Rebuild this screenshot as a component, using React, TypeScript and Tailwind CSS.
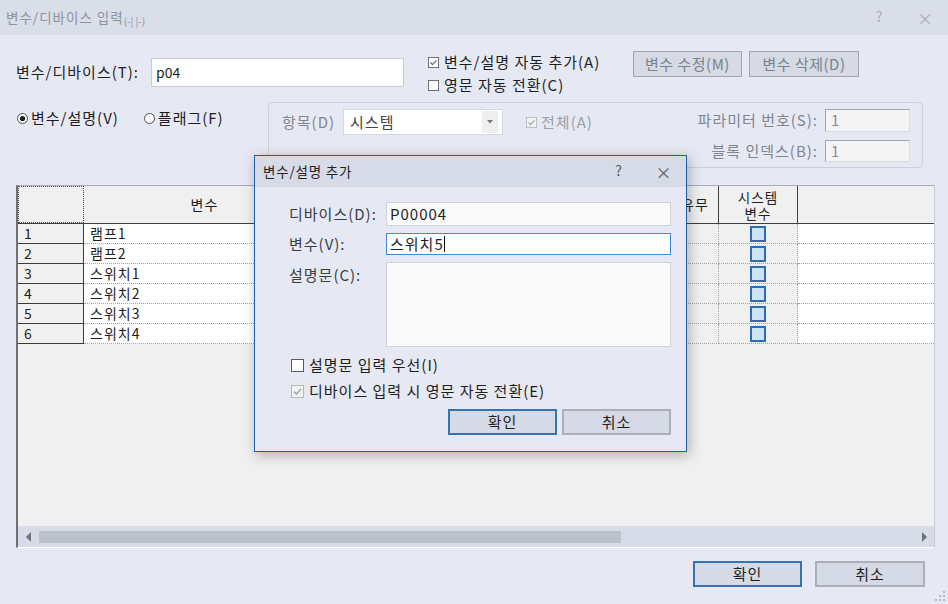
import React from "react";

/**
 * Variable/device input window with the "add variable/comment" dialog
 * floating on top of the variable table.
 */

const rows = ["램프1", "램프2", "스위치1", "스위치2", "스위치3", "스위치4"];

// Column widths of the variable table, left to right. The middle columns sit
// under the dialog, so their captions are left out.
const cols = [
  { w: "w-[242px]", label: "변수", white: true },
  { w: "w-[114px]", label: "", white: true },
  { w: "w-[200px]", label: "", white: true },
  { w: "w-[79px]", label: "사용 유무", white: false },
];

function CheckBox({
  checked,
  size = 11,
  muted = false,
}: {
  checked: boolean;
  size?: number;
  muted?: boolean;
}) {
  return (
    <svg width={size} height={size} viewBox="0 0 13 13" className="shrink-0">
      <rect
        x="0.5"
        y="0.5"
        width="12"
        height="12"
        fill={muted ? "#f3f3f3" : "#ffffff"}
        stroke={muted ? "#b4b7bd" : "#555a63"}
      />
      {checked && (
        <path
          d="M3 6.6 L5.4 9 L10 4"
          fill="none"
          stroke={muted ? "#a5a8ae" : "#6d7078"}
          strokeWidth="1.6"
        />
      )}
    </svg>
  );
}

function Radio({ on }: { on: boolean }) {
  return (
    <svg width="11" height="11" viewBox="0 0 11 11" className="shrink-0">
      <circle cx="5.5" cy="5.5" r="5" fill="#ffffff" stroke="#4b4f57" />
      {on && <circle cx="5.5" cy="5.5" r="2.6" fill="#1e1e1e" />}
    </svg>
  );
}

function Field({ children, w }: { children?: React.ReactNode; w: string }) {
  // sunken, read-only style box used in the parameter group
  return (
    <div
      className={`${w} h-full flex items-center border border-[#a3a6ad] border-r-[#d9dbe0] border-b-[#d9dbe0] bg-[#f4f4f4] pl-[5px] text-[15px] text-[#8a8e96]`}
    >
      {children}
    </div>
  );
}

function AddDialog() {
  return (
    <div className="absolute left-[254px] top-[155px] w-[433px] h-[297px] border border-[#1f5fa6] bg-[#e6e9f3] shadow-[2px_3px_12px_rgba(40,50,70,0.35)] flex flex-col">
      <div className="h-[31px] shrink-0 flex items-center bg-[#d6dbe7] pl-[8px] text-[13.5px] tracking-[0.8px] text-[#232323]">
        <span className="whitespace-nowrap">변수/설명 추가</span>
        <div className="ml-auto flex text-[#555a62]">
          <span className="w-[46px] text-center text-[14px]">?</span>
          <span className="w-[44px] text-center text-[16px]">×</span>
        </div>
      </div>

      <div className="flex flex-col pl-[34px] pr-[15px] pt-[15px] text-[15px] tracking-[1px]">
        <div className="flex items-center h-[24px]">
          <span className="w-[97px] whitespace-nowrap text-[#3a3d44]">디바이스(D):</span>
          <div className="flex-1 h-full flex items-center border border-[#cfd2d8] bg-[#fafafa] pl-[3px] text-[#1e1e1e]">
            P00004
          </div>
        </div>
        <div className="flex items-center h-[22px] mt-[7px]">
          <span className="w-[97px] whitespace-nowrap text-[#3a3d44]">변수(V):</span>
          <div className="flex-1 h-full flex items-center border border-[#3f8ad6] bg-white pl-[3px] text-[#1e1e1e]">
            스위치5
            <span className="w-px h-[16px] bg-black" />
          </div>
        </div>
        <div className="flex items-start mt-[7px]">
          <span className="w-[97px] whitespace-nowrap text-[#3a3d44] mt-[2px]">설명문(C):</span>
          <div className="flex-1 h-[85px] border border-[#cfd2d8] bg-[#fafafa]" />
        </div>

        <div className="flex items-center gap-[5px] h-[20px] mt-[8px] pl-[2px]">
          <CheckBox checked={false} size={13} />
          <span className="whitespace-nowrap">설명문 입력 우선(I)</span>
        </div>
        <div className="flex items-center gap-[5px] h-[20px] mt-[6px] pl-[2px]">
          <CheckBox checked size={13} muted />
          <span className="whitespace-nowrap">디바이스 입력 시 영문 자동 전환(E)</span>
        </div>

        <div className="flex justify-end gap-[5px] mt-[8px]">
          <button className="w-[109px] h-[26px] border-2 border-[#3473b4] bg-[#d5dae6] text-[15px] text-[#1e1e1e]">
            확인
          </button>
          <button className="w-[109px] h-[26px] border-2 border-[#abafb8] bg-[#d5dae6] text-[15px] text-[#1e1e1e]">
            취소
          </button>
        </div>
      </div>
    </div>
  );
}

function VarTable() {
  return (
    <div className="mt-[17px] w-[919px] h-[363px] flex flex-col border-t border-[#a9adb5] border-l-2 border-l-[#707070] border-r border-r-[#c7cbd3] border-b border-b-white bg-[#f0f0f0] text-[14px] tracking-[1px] text-[#1e1e1e]">
      {/* header */}
      <div className="h-[38px] shrink-0 flex border-b border-[#3f3f3f]">
        <div className="w-[66px] border border-dotted border-[#4a4a4a]" />
        {cols.map((c, j) => (
          <div
            key={j}
            className={`${c.w} flex items-center justify-center border-r border-[#3f3f3f] whitespace-nowrap`}
          >
            {c.label}
          </div>
        ))}
        <div className="w-[79px] flex items-center justify-center border-r border-[#3f3f3f] text-[13.5px] leading-[16px] text-center">
          <span>
            시스템
            <br />
            변수
          </span>
        </div>
        <div className="flex-1" />
      </div>

      {rows.map((name, i) => (
        <div key={name} className="h-[20px] shrink-0 flex">
          <div className="w-[66px] border-r border-b border-[#3a3a3a] pl-[6px] leading-[19px]">
            {i + 1}
          </div>
          {cols.map((c, j) => (
            <div
              key={j}
              className={`${c.w} border-r border-b border-dotted border-[#a2a2a2] ${
                c.white ? "bg-white" : "bg-[#f0f0f0]"
              } pl-[6px] leading-[19px] whitespace-nowrap`}
            >
              {j === 0 ? name : ""}
            </div>
          ))}
          <div className="w-[79px] flex items-center justify-center border-r border-b border-dotted border-[#a2a2a2]">
            <div className="w-[16px] h-[16px] border-2 border-[#2b6cb3] bg-[#cde4f8]" />
          </div>
          <div className="flex-1 bg-white border-b border-dotted border-[#a2a2a2]" />
        </div>
      ))}

      <div className="flex-1" />

      {/* horizontal scroll bar */}
      <div className="h-[21px] shrink-0 flex items-center bg-[#d6dbe7]">
        <svg width="8" height="10" viewBox="0 0 8 10" className="ml-[7px]">
          <path d="M6 0 L1 5 L6 10 Z" fill="#6e7279" />
        </svg>
        <div className="ml-[6px] w-[582px] h-[12px] bg-[#bcc1ca]" />
        <svg width="8" height="10" viewBox="0 0 8 10" className="ml-auto mr-[6px]">
          <path d="M2 0 L7 5 L2 10 Z" fill="#6e7279" />
        </svg>
      </div>
    </div>
  );
}

export default function App() {
  return (
    <div className="relative w-[948px] h-[604px] overflow-hidden bg-[#e6e9f3] text-[#1e1e1e] font-['Noto_Sans_CJK_KR','Noto_Sans',sans-serif]">
      {/* window title */}
      <div className="h-[35px] flex items-center bg-[#d9dee9] pl-[6px] text-[#8d929c]">
        <span className="text-[13.5px] tracking-[1px] whitespace-nowrap">변수/디바이스 입력</span>
        <span className="text-[10px] mt-[5px] whitespace-nowrap">(-| |-)</span>
        <div className="ml-auto flex text-[#a9adb5]">
          <span className="w-[46px] text-center text-[14px]">?</span>
          <span className="w-[46px] text-center text-[16px]">×</span>
        </div>
      </div>

      <div className="flex flex-col pl-[16px] pr-[13px] text-[15px] tracking-[1px]">
        {/* device input row */}
        <div className="mt-[16px] h-[46px] flex items-start">
          <div className="mt-[7px] h-[29px] flex items-center">
            <span className="w-[135px] whitespace-nowrap">변수/디바이스(T):</span>
            <div className="w-[253px] h-full flex items-center border border-[#c9ccd3] bg-white pl-[4px] text-[14px] tracking-normal">
              p04
            </div>
          </div>
          <div className="ml-[24px] w-[205px] flex flex-col">
            <div className="h-[23px] flex items-center gap-[5px]">
              <CheckBox checked />
              <span className="whitespace-nowrap">변수/설명 자동 추가(A)</span>
            </div>
            <div className="h-[23px] flex items-center gap-[5px]">
              <CheckBox checked={false} />
              <span className="whitespace-nowrap">영문 자동 전환(C)</span>
            </div>
          </div>
          <div className="flex gap-[7px] tracking-[0.5px]">
            <button className="w-[109px] h-[26px] border border-[#a2a6af] bg-[#d5dae5] text-[15px] text-[#7b808a] whitespace-nowrap">
              변수 수정(M)
            </button>
            <button className="w-[110px] h-[26px] border border-[#a2a6af] bg-[#d5dae5] text-[15px] text-[#7b808a] whitespace-nowrap">
              변수 삭제(D)
            </button>
          </div>
        </div>

        {/* radio + parameter group */}
        <div className="mt-[5px] flex items-start">
          <div className="w-[252px] h-[20px] mt-[6px] flex items-center pl-[1px]">
            <Radio on />
            <span className="ml-[3px] whitespace-nowrap">변수/설명(V)</span>
            <span className="ml-[25px]">
              <Radio on={false} />
            </span>
            <span className="ml-[3px] whitespace-nowrap">플래그(F)</span>
          </div>

          <div className="w-[655px] h-[66px] flex items-start border border-[#cbd0da] rounded-[4px] pl-[13px] pt-[6px]">
            <div className="h-[26px] flex items-center">
              <span className="text-[#80858f] whitespace-nowrap">항목(D)</span>
              <div className="ml-[8px] w-[160px] h-full flex items-center border border-[#d4d7dd] bg-white pl-[6px] text-[#444]">
                시스템
                <div className="ml-auto mr-[4px] w-[16px] h-[22px] bg-[#efefef] flex items-center justify-center">
                  <svg width="6" height="4" viewBox="0 0 6 4">
                    <path d="M0 0 L6 0 L3 3.5 Z" fill="#777" />
                  </svg>
                </div>
              </div>
              <div className="ml-[23px] flex items-center gap-[4px] text-[#9a9ea6]">
                <CheckBox checked muted />
                <span className="whitespace-nowrap">전체(A)</span>
              </div>
            </div>

            <div className="ml-auto mr-[12px] flex flex-col gap-[8px] text-[#80858f]">
              <div className="h-[23px] flex items-center justify-end">
                <span className="mr-[7px] whitespace-nowrap">파라미터 번호(S):</span>
                <Field w="w-[85px]">1</Field>
              </div>
              <div className="h-[22px] flex items-center justify-end">
                <span className="mr-[7px] whitespace-nowrap">블록 인덱스(B):</span>
                <Field w="w-[85px]">1</Field>
              </div>
            </div>
          </div>
        </div>

        <VarTable />

        {/* window buttons */}
        <div className="mt-[13px] mr-[10px] flex justify-end gap-[13px]">
          <button className="w-[109px] h-[26px] border-2 border-[#3473b4] bg-[#d5dae6] text-[15px]">
            확인
          </button>
          <button className="w-[110px] h-[26px] border-2 border-[#abafb8] bg-[#d5dae6] text-[15px]">
            취소
          </button>
        </div>
      </div>

      {/* size grip */}
      <svg width="10" height="10" viewBox="0 0 10 10" className="absolute right-[3px] bottom-[3px]">
        <rect x="8" y="0" width="2" height="2" fill="#b4b8c0" />
        <rect x="8" y="4" width="2" height="2" fill="#b4b8c0" />
        <rect x="4" y="4" width="2" height="2" fill="#b4b8c0" />
        <rect x="8" y="8" width="2" height="2" fill="#b4b8c0" />
        <rect x="4" y="8" width="2" height="2" fill="#b4b8c0" />
        <rect x="0" y="8" width="2" height="2" fill="#b4b8c0" />
      </svg>

      <AddDialog />
    </div>
  );
}
